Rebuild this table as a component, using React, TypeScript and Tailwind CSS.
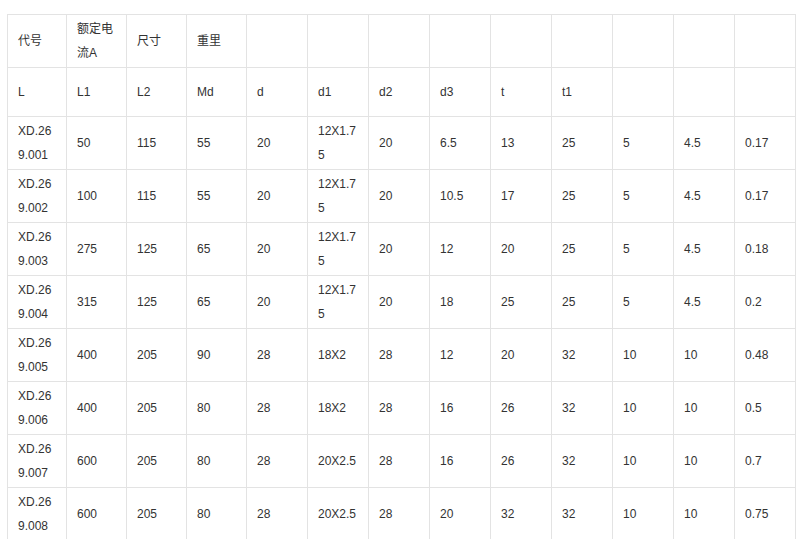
import React from "react";

const widths = [59, 60, 60, 60, 61, 61, 61, 61, 61, 61, 61, 61, 61];

const head1 = ["代号", "额定电流A", "尺寸", "重里", "", "", "", "", "", "", "", "", ""];
const head2 = ["L", "L1", "L2", "Md", "d", "d1", "d2", "d3", "t", "t1", "", "", ""];

const rows: string[][] = [
  ["XD.269.001", "50", "115", "55", "20", "12X1.75", "20", "6.5", "13", "25", "5", "4.5", "0.17"],
  ["XD.269.002", "100", "115", "55", "20", "12X1.75", "20", "10.5", "17", "25", "5", "4.5", "0.17"],
  ["XD.269.003", "275", "125", "65", "20", "12X1.75", "20", "12", "20", "25", "5", "4.5", "0.18"],
  ["XD.269.004", "315", "125", "65", "20", "12X1.75", "20", "18", "25", "25", "5", "4.5", "0.2"],
  ["XD.269.005", "400", "205", "90", "28", "18X2", "28", "12", "20", "32", "10", "10", "0.48"],
  ["XD.269.006", "400", "205", "80", "28", "18X2", "28", "16", "26", "32", "10", "10", "0.5"],
  ["XD.269.007", "600", "205", "80", "28", "20X2.5", "28", "16", "26", "32", "10", "10", "0.7"],
  ["XD.269.008", "600", "205", "80", "28", "20X2.5", "28", "20", "32", "32", "10", "10", "0.75"],
];

export default function App() {
  return (
    <div
      className="w-[801px] h-[539px] overflow-hidden bg-white pt-[14px] pl-[7px] text-[#333333] text-[12px] leading-[24px]"
      style={{ fontFamily: '"Liberation Sans", Arial, "Noto Sans CJK SC", sans-serif' }}
    >
      <table className="table-fixed border-collapse w-[789px]">
        <colgroup>
          {widths.map((w, i) => (
            <col key={i} style={{ width: w }} />
          ))}
        </colgroup>
        <tbody>
          <tr>
            {head1.map((t, i) => (
              <td key={i} className="border border-[#e3e3e3] px-[10px] py-[2px] h-[53px] align-middle break-all">
                {t}
              </td>
            ))}
          </tr>
          <tr>
            {head2.map((t, i) => (
              <td key={i} className="border border-[#e3e3e3] px-[10px] py-[12px] align-middle break-all">
                {t}
              </td>
            ))}
          </tr>
          {rows.map((r, ri) => (
            <tr key={ri}>
              {r.map((t, i) => (
                <td key={i} className="border border-[#e3e3e3] px-[10px] py-[2px] align-middle break-all">
                  {t}
                </td>
              ))}
            </tr>
          ))}
        </tbody>
      </table>
    </div>
  );
}
